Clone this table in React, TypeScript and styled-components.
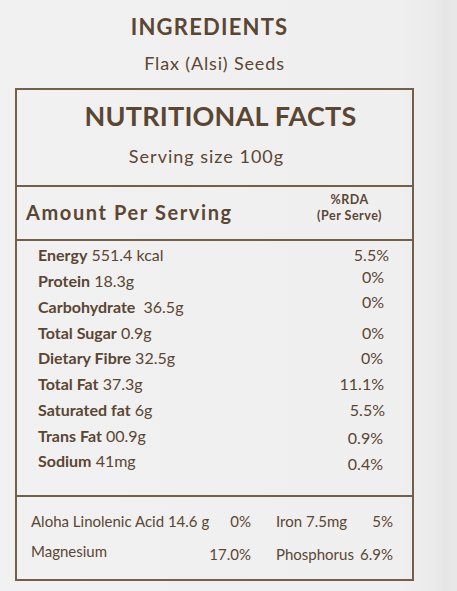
import React from "react";
import styled, { createGlobalStyle } from "styled-components";

const TEXT = "#5b4632";
const LINE = "#74604a";
const FONT = `"Lato", "Noto Sans", sans-serif`;

const Global = createGlobalStyle`
  html, body { margin: 0; padding: 0; }
  body {
    width: 457px;
    height: 591px;
    overflow: hidden;
    background: linear-gradient(to right, #f1f1f1 0px, #efefef 400px, #ebebeb 432px, #e6e6e6 445px, #e8e8e8 457px);
    font-family: ${FONT};
    color: ${TEXT};
  }
`;

const Page = styled.div`
  width: 399px;
  margin-left: 15px;
  padding-top: 14px;
  box-sizing: border-box;
`;

const Header = styled.header`
  display: flex;
  flex-direction: column;
  align-items: center;
`;

const Title = styled.h1`
  margin: 0 10px 0 0;
  font-size: 22px;
  line-height: 26px;
  font-weight: 700;
  letter-spacing: 1.2px;
`;

const Subtitle = styled.p`
  margin: 12px 0 0 0;
  font-size: 18px;
  line-height: 22px;
  font-weight: 400;
  letter-spacing: 0.85px;
`;

const Box = styled.section`
  margin-top: 14px;
  border: 2px solid ${LINE};
  display: flex;
  flex-direction: column;
`;

const Block = styled.div<{ $h: number; $last?: boolean }>`
  height: ${(p) => p.$h}px;
  box-sizing: border-box;
  border-bottom: ${(p) => (p.$last ? "none" : `2px solid ${LINE}`)};
`;

const FactsHead = styled(Block)`
  display: flex;
  flex-direction: column;
  align-items: center;
  padding-top: 10px;
`;

const BigHeading = styled.h2`
  margin: 0 0 0 12px;
  font-size: 27px;
  line-height: 32px;
  font-weight: 700;
  letter-spacing: 0.2px;
`;

const Serving = styled.p`
  margin: 13px 16px 0 0;
  font-size: 18px;
  line-height: 22px;
  letter-spacing: 1px;
`;

const AmountBar = styled(Block)`
  display: flex;
  justify-content: space-between;
  padding: 0 30px 0 9px;
`;

const Amount = styled.h3`
  margin: 13px 0 0 0;
  font-size: 20px;
  line-height: 24px;
  font-weight: 700;
  letter-spacing: 1.6px;
`;

const Rda = styled.div`
  margin-top: 5px;
  display: flex;
  flex-direction: column;
  align-items: center;
  font-size: 12.5px;
  line-height: 16px;
  font-weight: 700;
  letter-spacing: 0.5px;
`;

const List = styled(Block)`
  display: flex;
  flex-direction: column;
  padding: 1px 28px 0 21px;
`;

const Row = styled.div`
  height: 25.75px;
  display: flex;
  justify-content: space-between;
  align-items: center;
  font-size: 16px;
  line-height: 19px;
`;

const Nutrient = styled.span`
  white-space: nowrap;
  b { font-weight: 700; }
`;

const Pct = styled.span<{ $dy: number; $dx: number }>`
  position: relative;
  top: ${(p) => p.$dy}px;
  left: ${(p) => p.$dx}px;
`;

const Extras = styled(Block)`
  display: grid;
  grid-template-columns: 176px 44px 1fr auto;
  grid-auto-rows: 18px;
  row-gap: 15px;
  align-content: start;
  padding: 15px 19px 0 14px;
  font-size: 15px;
  line-height: 18px;
`;

const Cell = styled.span<{ $right?: boolean; $indent?: boolean; $dy?: number }>`
  white-space: nowrap;
  text-align: ${(p) => (p.$right ? "right" : "left")};
  padding-left: ${(p) => (p.$indent ? "25px" : "0")};
  position: relative;
  top: ${(p) => p.$dy ?? 0}px;
`;

const rows = [
  { b: "Energy", v: "551.4 kcal", p: "5.5%", dy: 0, dx: 5 },
  { b: "Protein", v: "18.3g", p: "0%", dy: -4, dx: 0 },
  { b: "Carbohydrate", v: "\u00a036.5g", p: "0%", dy: -5, dx: 0 },
  { b: "Total Sugar", v: "0.9g", p: "0%", dy: 0, dx: 0 },
  { b: "Dietary Fibre", v: "32.5g", p: "0%", dy: 0, dx: -1 },
  { b: "Total Fat", v: "37.3g", p: "11.1%", dy: 0, dx: 0 },
  { b: "Saturated fat", v: "6g", p: "5.5%", dy: 0, dx: 1 },
  { b: "Trans Fat", v: "00.9g", p: "0.9%", dy: 2, dx: -1 },
  { b: "Sodium", v: "41mg", p: "0.4%", dy: 3, dx: -1 },
];

export default function App() {
  return (
    <>
      <Global />
      <Page>
        <Header>
          <Title>INGREDIENTS</Title>
          <Subtitle>Flax (Alsi) Seeds</Subtitle>
        </Header>
        <Box>
          <FactsHead $h={97}>
            <BigHeading>NUTRITIONAL FACTS</BigHeading>
            <Serving>Serving size 100g</Serving>
          </FactsHead>
          <AmountBar $h={54}>
            <Amount>Amount Per Serving</Amount>
            <Rda>
              <span>%RDA</span>
              <span>(Per Serve)</span>
            </Rda>
          </AmountBar>
          <List $h={256}>
            {rows.map((r) => (
              <Row key={r.b}>
                <Nutrient>
                  <b>{r.b}</b> {r.v}
                </Nutrient>
                <Pct $dy={r.dy} $dx={r.dx}>
                  {r.p}
                </Pct>
              </Row>
            ))}
          </List>
          <Extras $h={82} $last>
            <Cell>Aloha Linolenic Acid 14.6 g</Cell>
            <Cell $right>0%</Cell>
            <Cell $indent>Iron 7.5mg</Cell>
            <Cell $right>5%</Cell>
            <Cell $dy={-3}>Magnesium</Cell>
            <Cell $right>17.0%</Cell>
            <Cell $indent>Phosphorus</Cell>
            <Cell $right>6.9%</Cell>
          </Extras>
        </Box>
      </Page>
    </>
  );
}
